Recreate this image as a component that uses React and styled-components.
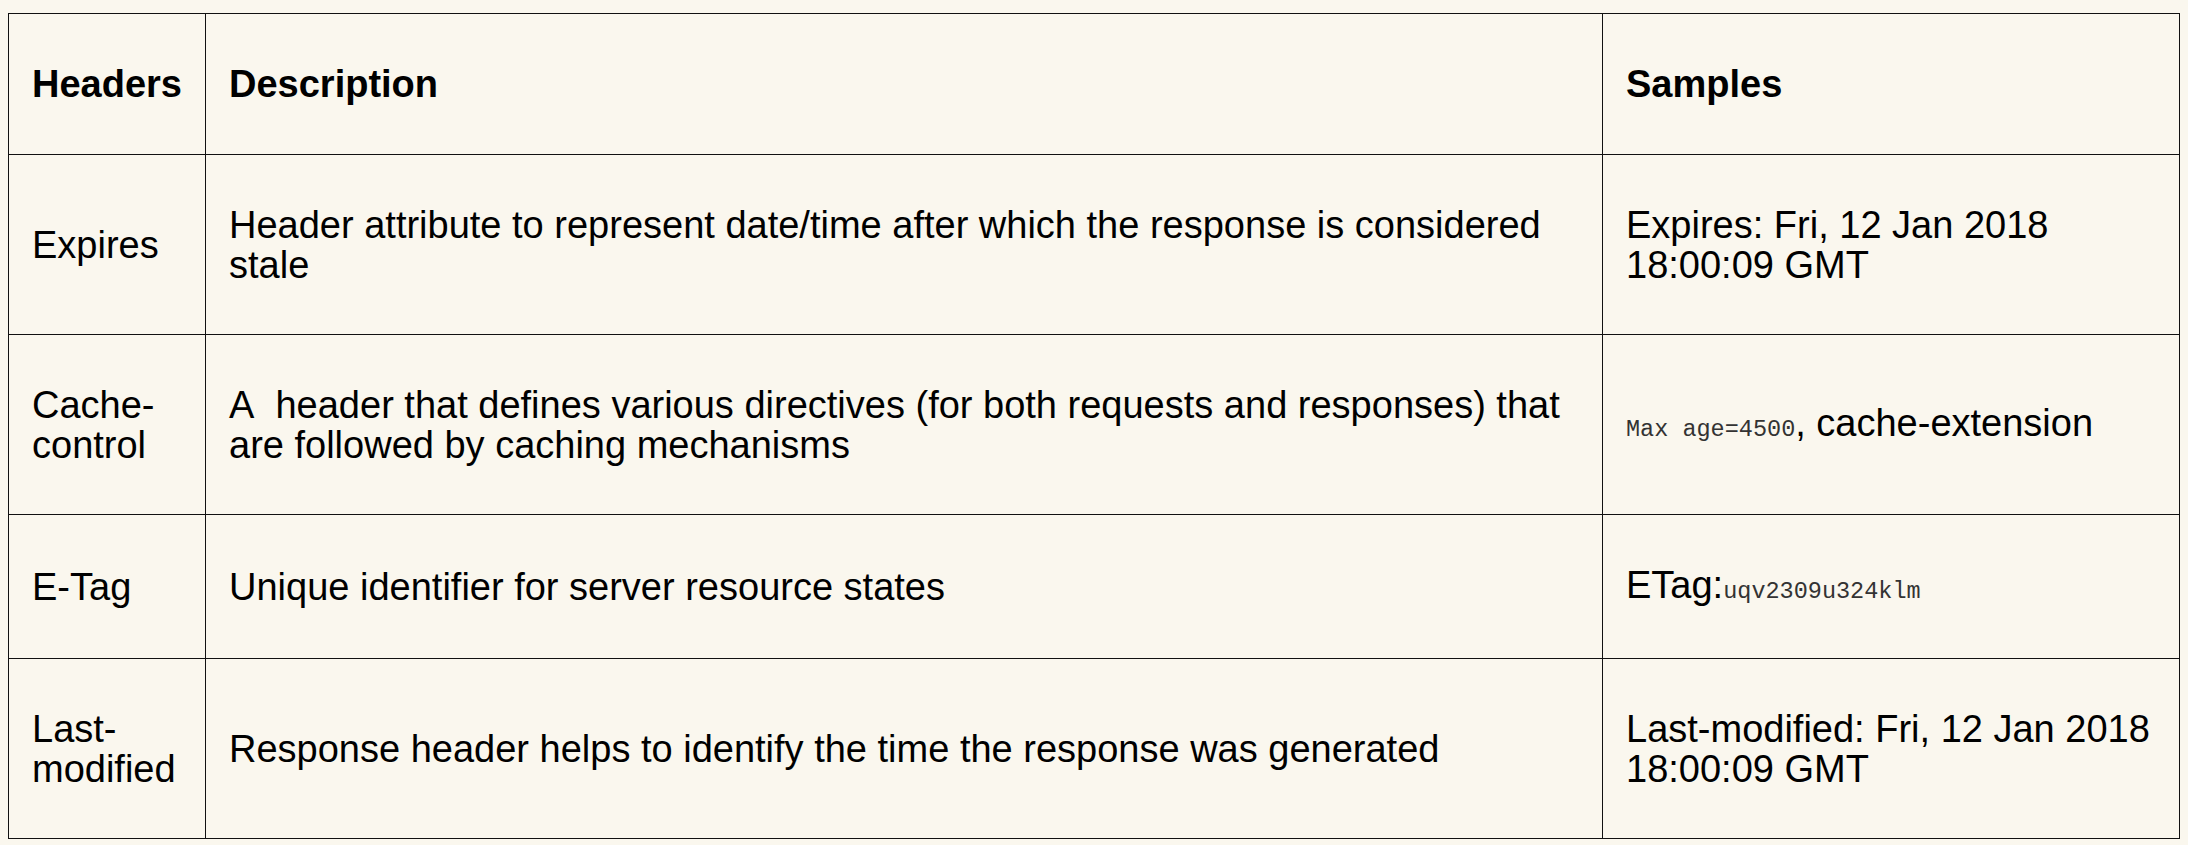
import styled, { createGlobalStyle } from "styled-components";

const GlobalStyle = createGlobalStyle`
  html, body {
    margin: 0;
    background: #faf7ee;
  }
  body {
    padding: 13px 8px 0 8px;
    font-family: "Liberation Sans", Arial, sans-serif;
    color: #000;
  }
`;

const Table = styled.table`
  width: 100%;
  border-collapse: collapse;
  table-layout: fixed;
  font-size: 38px;
  line-height: 40px;
`;

const Cell = styled.td`
  border: 1px solid #111;
  padding: ${({ $head }) => ($head ? "50px 23px" : "49.5px 23px")};
  vertical-align: middle;
  text-align: left;
  font-weight: ${({ $head }) => ($head ? 700 : 400)};
`;

const Code = styled.code`
  font-family: "Liberation Mono", "Courier New", monospace;
  font-size: 23.5px;
  line-height: 35px;
  color: #333;
`;

const rows = [
  {
    name: "Expires",
    desc: "Header attribute to represent date/time after which the response is considered stale",
    sample: "Expires: Fri, 12 Jan 2018 18:00:09 GMT",
  },
  {
    name: "Cache-control",
    desc: "A\u00a0 header that defines various directives (for both requests and responses) that are followed by caching mechanisms",
    sample: (
      <>
        <Code>Max age=4500</Code>, cache-extension
      </>
    ),
  },
  {
    name: "E-Tag",
    desc: "Unique identifier for server resource states",
    sample: (
      <>
        ETag:<Code>uqv2309u324klm</Code>
      </>
    ),
  },
  {
    name: "Last-modified",
    desc: "Response header helps to identify the time the response was generated",
    sample: "Last-modified: Fri, 12 Jan 2018 18:00:09 GMT",
  },
];

const App = () => {
  return (
    <>
      <GlobalStyle />
      <Table>
        <colgroup>
          <col style={{ width: "197px" }} />
          <col />
          <col style={{ width: "577px" }} />
        </colgroup>
        <thead>
          <tr>
            <Cell as="th" $head>Headers</Cell>
            <Cell as="th" $head>Description</Cell>
            <Cell as="th" $head>Samples</Cell>
          </tr>
        </thead>
        <tbody>
          {rows.map((r) => (
            <tr key={r.name}>
              <Cell>{r.name}</Cell>
              <Cell>{r.desc}</Cell>
              <Cell>{r.sample}</Cell>
            </tr>
          ))}
        </tbody>
      </Table>
    </>
  );
};

export default App;
